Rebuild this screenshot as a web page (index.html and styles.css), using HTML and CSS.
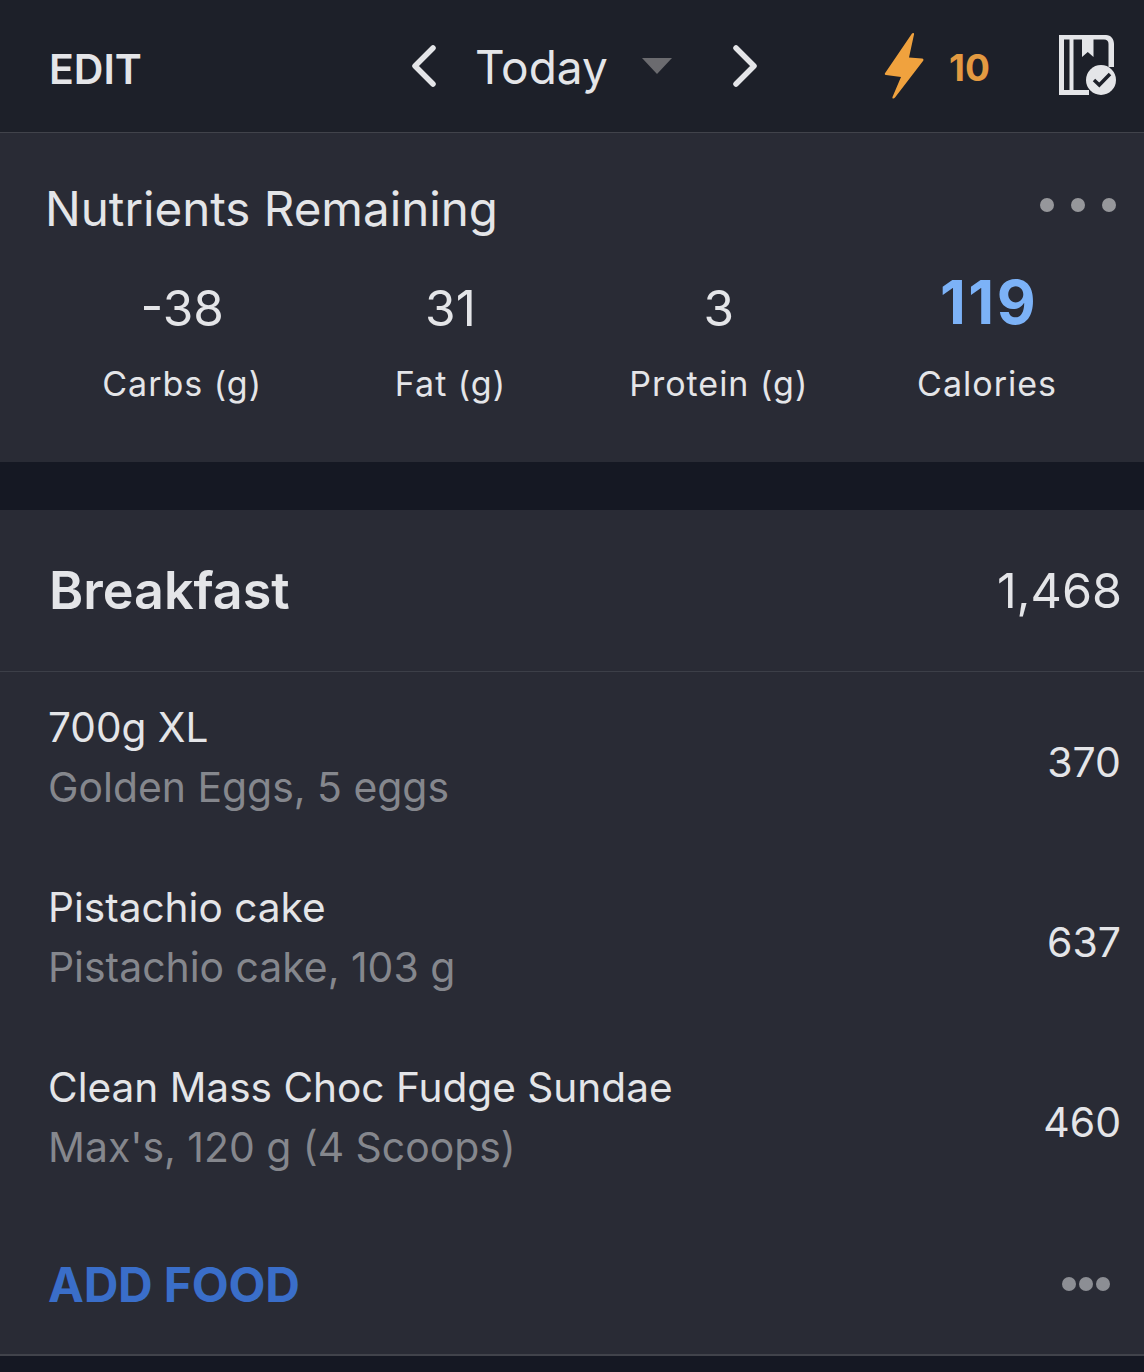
FILE: index.html
```html
<!DOCTYPE html>
<html lang="en">
<head>
<meta charset="utf-8">
<title>Diary</title>
<link rel="stylesheet" href="styles.css">
</head>
<body>
<header class="topbar">
  <span class="edit">EDIT</span>
  <div class="datenav">
    <svg class="chev" width="28" height="44" viewBox="0 0 28 44"><path d="M23 4 L5 22 L23 40" /></svg>
    <span class="today">Today</span>
    <svg class="caret" width="30" height="16" viewBox="0 0 30 16"><path d="M0 0H30L15 16Z"/></svg>
    <svg class="chev" width="28" height="44" viewBox="0 0 28 44"><path d="M5 4 L23 22 L5 40" /></svg>
  </div>
  <div class="streak">
    <svg width="42" height="68" viewBox="0 0 42 68"><path d="M28 1.500 C29 .5 30.500 1 30 2.500 L25 25.500 L38 26.500 C39.500 26.500 40 28 39 29 L11 65.500 C9.500 67.500 8 66.500 8.500 65 L17 45 L2 43 C.5 43 .5 41.500 1.500 40.500 Z"/></svg>
    <span class="streak-num">10</span>
  </div>
  <svg class="book" width="58" height="62" viewBox="0 0 58 62">
    <path class="book-fill" fill-rule="evenodd" d="M0 0H47C52 0 55 4 55 9V32H49.500V9C49.500 6 48 4.500 45 4.500H34.500V22L28.800 17L23 22V4.500H14.500V55H30V60H0Z M5 4.500V55H10.500V4.500Z"/>
    <circle class="book-disc" cx="42" cy="45" r="15"/>
    <path class="book-check" d="M35 45L40.300 50L51 39"/>
  </svg>
</header>

<section class="nutrients">
  <div class="nutrients-head">
    <h2 class="nutrients-title">Nutrients Remaining</h2>
    <div class="dots"><i></i><i></i><i></i></div>
  </div>
  <div class="macros">
    <div class="macro"><div class="macro-val">-38</div><div class="macro-label">Carbs (g)</div></div>
    <div class="macro"><div class="macro-val">31</div><div class="macro-label">Fat (g)</div></div>
    <div class="macro"><div class="macro-val">3</div><div class="macro-label">Protein (g)</div></div>
    <div class="macro"><div class="macro-val macro-cal">119</div><div class="macro-label">Calories</div></div>
  </div>
</section>

<section class="meal">
  <div class="meal-head">
    <h2 class="meal-title">Breakfast</h2>
    <span class="meal-total">1,468</span>
  </div>
  <div class="food">
    <div class="food-text"><div class="food-name">700g XL</div><div class="food-sub">Golden Eggs, 5 eggs</div></div>
    <span class="food-cal">370</span>
  </div>
  <div class="food">
    <div class="food-text"><div class="food-name">Pistachio cake</div><div class="food-sub">Pistachio cake, 103 g</div></div>
    <span class="food-cal">637</span>
  </div>
  <div class="food">
    <div class="food-text"><div class="food-name">Clean Mass Choc Fudge Sundae</div><div class="food-sub">Max's, 120 g (4 Scoops)</div></div>
    <span class="food-cal">460</span>
  </div>
  <div class="meal-foot">
    <span class="add">ADD FOOD</span>
    <div class="dots-small"><i></i><i></i><i></i></div>
  </div>
</section>
</body>
</html>
```

FILE: styles.css
```css
* { box-sizing: border-box; }
html, body { margin: 0; padding: 0; }
body {
  width: 1144px;
  height: 1372px;
  overflow: hidden;
  background: #151823;
  font-family: Inter, "Liberation Sans", sans-serif;
  color: #e4e5e8;
}
.topbar {
  height: 133px;
  background: #1d2029;
  border-bottom: 1px solid #41434b;
  display: flex;
  align-items: center;
  padding: 0 0 0 49px;
}
.edit { font-size: 41px; font-weight: 600; width: 361px; margin-top: 6px; }
.datenav { display: flex; align-items: center; width: 351px; }
.chev { flex: none; fill: none; stroke: #e4e5e8; stroke-width: 5.500; stroke-linecap: round; stroke-linejoin: round; }
.today { font-size: 46px; margin-left: 37px; margin-right: 35px; margin-top: 2px; width: 132px; }
.caret { flex: none; fill: #6b6b6f; margin-right: 59px; }
.streak { display: flex; align-items: center; gap: 23px; width: 175px; margin-left: 123px; }
.streak svg { flex: none; fill: #f0a23e; }
.streak-num { font-size: 37px; font-weight: 700; color: #e39a41; margin-top: 2px; }
.book { flex: none; }
.book-fill { fill: #e4e5e8; }
.book-disc { fill: #e4e5e8; }
.book-check { fill: none; stroke: #1d2029; stroke-width: 3.500; }

.nutrients {
  height: 329px;
  background: #292b35;
  padding: 48px 28px 0 45px;
}
.nutrients-head { display: flex; justify-content: space-between; align-items: flex-start; }
.nutrients-title { margin: 0; font-size: 47.500px; font-weight: 400; line-height: 56px; }
.dots { display: flex; gap: 17px; margin-top: 17px; }
.dots i { width: 14px; height: 14px; border-radius: 50%; background: #96979b; }
.macros { display: grid; grid-template-columns: repeat(4, 268.300px); margin: 33px 0 0 3px; }
.macro { text-align: center; display: flex; flex-direction: column; align-items: center; }
.macro-val { font-size: 49.500px; line-height: 64px; height: 64px; padding-top: 6px; }
.macro-cal { font-size: 60px; font-weight: 700; color: #7cb2f7; padding: 3px 0 0 4px; line-height: 58px; letter-spacing: 2.500px; }
.macro-label { font-size: 34px; line-height: 44px; margin-top: 28px; letter-spacing: 1px; }

.meal {
  margin-top: 48px;
  height: 846px;
  background: #292b35;
  border-bottom: 2px solid #41434b;
}
.meal-head {
  height: 162px;
  border-bottom: 1px solid #3c3f48;
  display: flex;
  align-items: center;
  justify-content: space-between;
  padding: 0 22px 0 49px;
}
.meal-title { margin: 0; font-size: 52px; font-weight: 600; }
.meal-total { font-size: 48.500px; }
.food {
  height: 180px;
  display: flex;
  align-items: center;
  justify-content: space-between;
  padding: 0 23px 0 48px;
}
.food-text { margin-bottom: 10px; }
.food-name { font-size: 40.600px; line-height: 60px; padding-top: 1px; margin-bottom: -1px; }
.food-sub { font-size: 40.900px; line-height: 60px; color: #85878d; }
.food-cal { font-size: 41px; }
.meal-foot {
  display: flex;
  align-items: center;
  justify-content: space-between;
  padding: 0 34px 0 48px;
  height: 120px;
  margin-top: 12px;
}
.add { font-size: 48px; font-weight: 700; color: #3a6ec9; letter-spacing: -.2px; }
.dots-small { display: flex; gap: 3px; }
.dots-small i { width: 14px; height: 14px; border-radius: 50%; background: #8c8e94; }
```
